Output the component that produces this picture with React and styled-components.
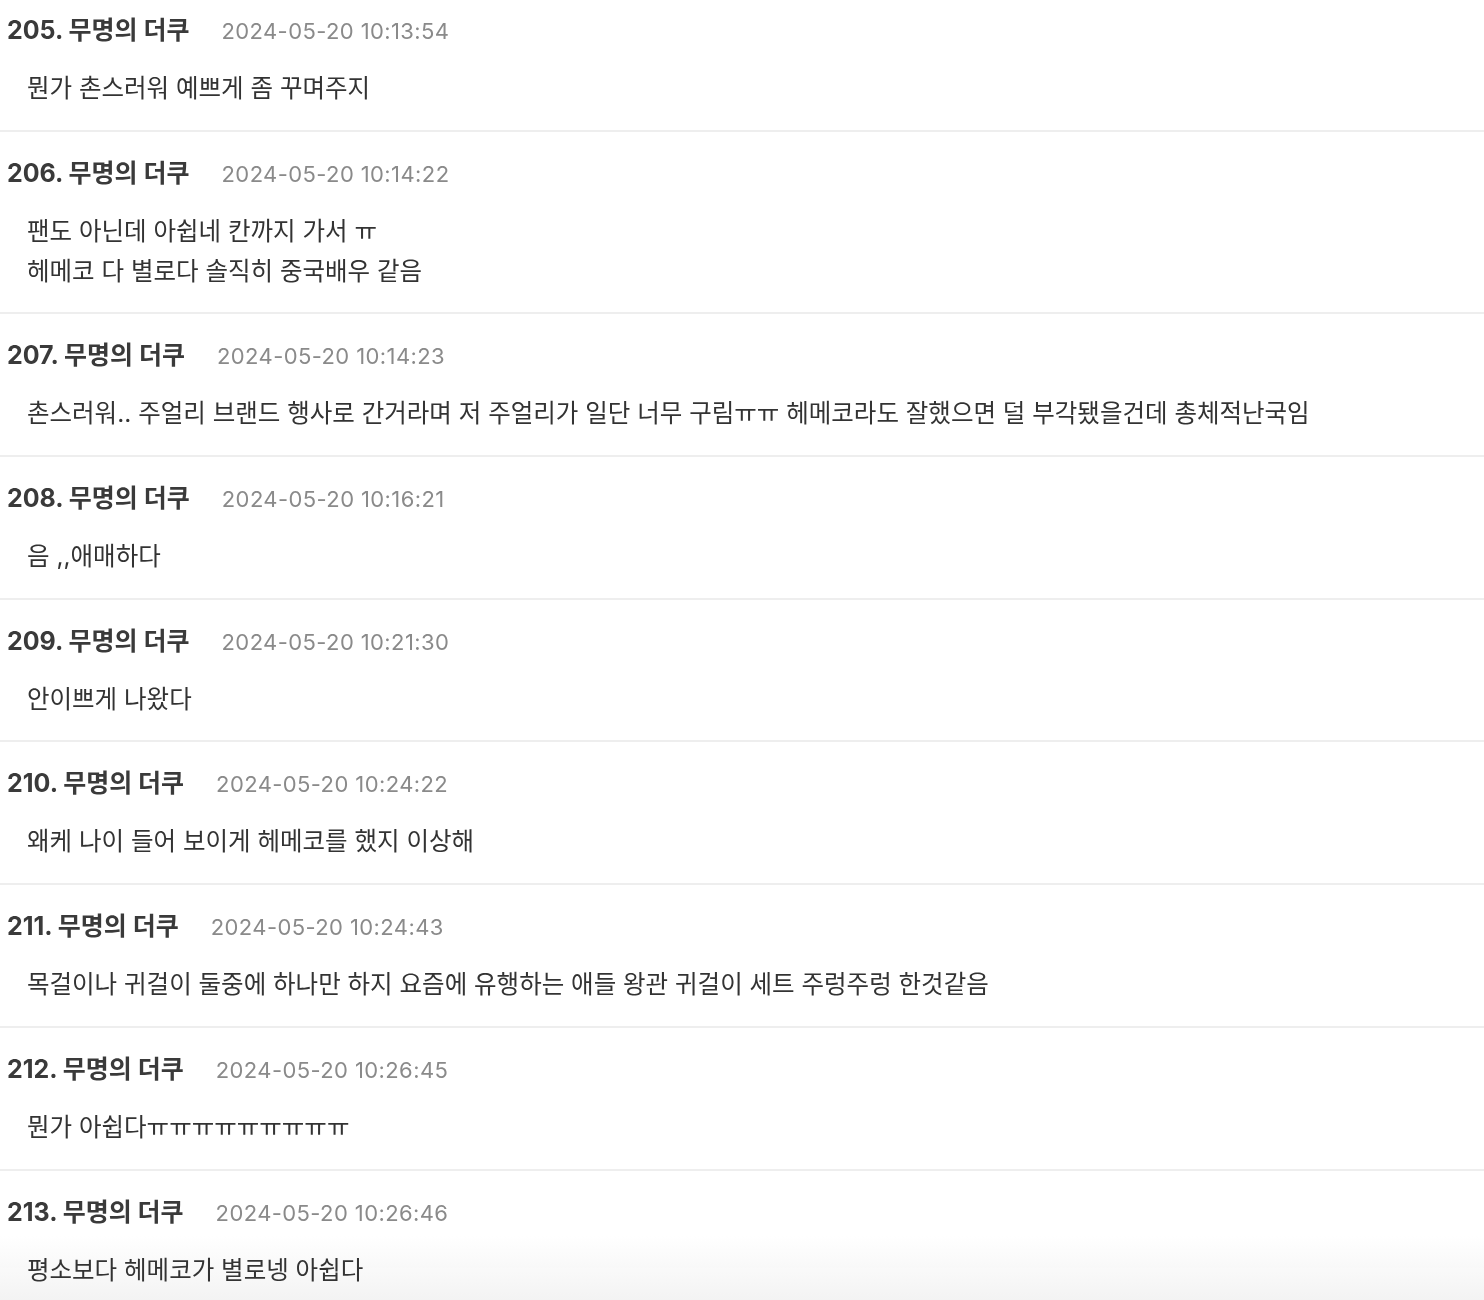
import styled, { createGlobalStyle } from "styled-components";

const GlobalStyle = createGlobalStyle`
  html {
    background: #ffffff;
  }
  body {
    margin: 0;
    padding: 0;
    font-family: Inter, "Noto Sans CJK KR", sans-serif;
    -webkit-font-smoothing: antialiased;
  }
`;

const comments = [
  { no: 205, time: "2024-05-20 10:13:54", lines: ["뭔가 촌스러워 예쁘게 좀 꾸며주지"] },
  {
    no: 206,
    time: "2024-05-20 10:14:22",
    lines: ["팬도 아닌데 아쉽네 칸까지 가서 ㅠ", "헤메코 다 별로다 솔직히 중국배우 같음"],
  },
  {
    no: 207,
    time: "2024-05-20 10:14:23",
    lines: [
      "촌스러워.. 주얼리 브랜드 행사로 간거라며 저 주얼리가 일단 너무 구림ㅠㅠ 헤메코라도 잘했으면 덜 부각됐을건데 총체적난국임",
    ],
  },
  { no: 208, time: "2024-05-20 10:16:21", lines: ["음 ,,애매하다"] },
  { no: 209, time: "2024-05-20 10:21:30", lines: ["안이쁘게 나왔다"] },
  { no: 210, time: "2024-05-20 10:24:22", lines: ["왜케 나이 들어 보이게 헤메코를 했지 이상해"] },
  {
    no: 211,
    time: "2024-05-20 10:24:43",
    lines: ["목걸이나 귀걸이 둘중에 하나만 하지 요즘에 유행하는 애들 왕관 귀걸이 세트 주렁주렁 한것같음"],
  },
  { no: 212, time: "2024-05-20 10:26:45", lines: ["뭔가 아쉽다ㅠㅠㅠㅠㅠㅠㅠㅠㅠ"] },
  { no: 213, time: "2024-05-20 10:26:46", lines: ["평소보다 헤메코가 별로넹 아쉽다"] },
];

const List = styled.ul`
  list-style: none;
  margin: -11px 0 0;
  padding: 0;
`;

const Item = styled.li`
  padding: 26px 0 21.7px;
  border-bottom: 2px solid #eeeeee;
`;

const Header = styled.div`
  display: flex;
  align-items: baseline;
  gap: 32px;
  padding-left: 7px;
  height: 30px;
  line-height: 30px;
`;

const Author = styled.span`
  font-size: 25px;
  font-weight: 700;
  color: #3a3a3a;
`;

const Time = styled.span`
  font-size: 22px;
  font-weight: 400;
  letter-spacing: 0.4px;
  color: #8a8a8a;
`;

const Body = styled.div`
  margin-top: 23px;
  padding-left: 27px;
  font-size: 24.5px;
  line-height: 40px;
  color: #333333;
`;

const Fade = styled.div`
  position: fixed;
  left: 0;
  right: 0;
  bottom: 0;
  height: 64px;
  z-index: -1;
  pointer-events: none;
  background: linear-gradient(to bottom, rgba(243, 243, 243, 0), rgba(243, 243, 243, 1));
`;

export default function App() {
  return (
    <>
      <GlobalStyle />
      <List>
        {comments.map((c) => (
          <Item key={c.no}>
            <Header>
              <Author>{c.no}. 무명의 더쿠</Author>
              <Time>{c.time}</Time>
            </Header>
            <Body>
              {c.lines.map((line, i) => (
                <div key={i}>{line}</div>
              ))}
            </Body>
          </Item>
        ))}
      </List>
      <Fade />
    </>
  );
}
